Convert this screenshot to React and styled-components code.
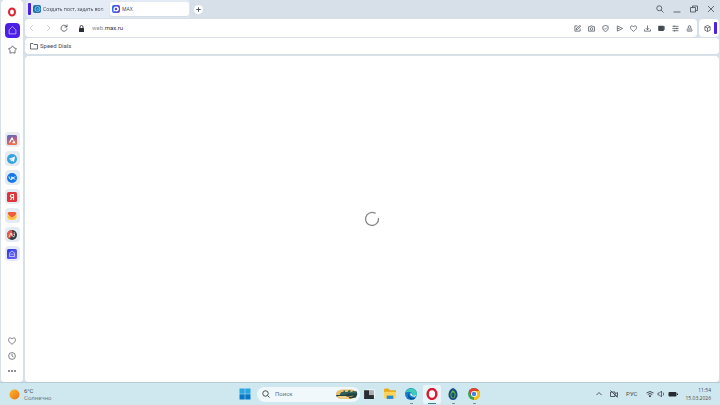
import styled, { createGlobalStyle, css } from 'styled-components';

const GlobalStyle = createGlobalStyle`
  * {
    box-sizing: border-box;
  }
  body {
    margin: 0;
    font-family: Roboto, 'Open Sans', sans-serif;
    font-size: 6px;
    line-height: 8px;
    color: #464d58;
    background: #d7e0e9;
  }
  button, input {
    font: inherit;
    color: inherit;
    border: none;
    padding: 0;
    background: none;
  }
  svg {
    display: block;
    flex: none;
  }
`;

const Screen = styled.div`
  height: 100vh;
  display: flex;
  flex-direction: column;
  overflow: hidden;
`;

const Browser = styled.div`
  flex: 1;
  min-height: 0;
  display: flex;
  gap: 2px;
  padding: 0 1px;
`;

const Sidebar = styled.aside`
  width: 22px;
  padding: 4px 0;
  display: flex;
  flex-direction: column;
  align-items: center;
  background: #fff;
  border-radius: 4px;
`;

const SideGroup = styled.nav`
  display: flex;
  flex-direction: column;
  gap: ${({ $gap }) => $gap}px;

  &:nth-child(2) {
    margin-top: 75px;
  }
  &:last-child {
    margin-top: auto;
  }
`;

const sideFills = {
  active: '#4c1fe8',
  tile: '#e5ebf2',
};

const SideButton = styled.button`
  width: 15px;
  height: 15px;
  display: grid;
  place-items: center;
  border-radius: 4px;
  background: ${({ $fill }) => sideFills[$fill] || 'none'};
  color: ${({ $fill }) => ($fill === 'active' ? '#d9d0ff' : '#5a5f67')};
`;

const Main = styled.div`
  flex: 1;
  min-width: 0;
  display: flex;
  flex-direction: column;
`;

const TitleBar = styled.header`
  height: 19px;
  padding: 0 0 1px 1px;
  display: flex;
  align-items: center;
`;

const TabIsland = styled.div`
  height: 18px;
  padding: 0 1px 0 2px;
  display: flex;
  align-items: center;
  background: #e5ecf6;
  border-radius: 4px;
`;

const Accent = styled.span`
  width: 3px;
  height: 12px;
  flex: none;
  border-radius: 1px;
  background: #4c1fe8;
`;

const Tab = styled.button`
  width: 79px;
  height: 14px;
  padding: 0 2px;
  display: flex;
  align-items: center;
  gap: 2px;
  font-family: 'Open Sans', sans-serif;
  font-size: 5px;
  text-align: left;
  white-space: nowrap;
  color: #38404c;
  border-radius: 3px;

  ${({ $active }) =>
    $active &&
    css`
      background: #fff;
      box-shadow: 0 1px 2px #a9b5c466;
    `}
`;

const TabTitle = styled.span`
  flex: 1;
  mask-image: linear-gradient(90deg, #000 85%, #0004);
`;

const NewTab = styled.button`
  width: 9px;
  height: 9px;
  margin-left: 4px;
  display: grid;
  place-items: center;
  background: #fff;
  border-radius: 50%;
`;

const WindowControls = styled.div`
  margin-left: auto;
  padding-right: 3px;
  display: flex;
  gap: 7px;
`;

const IconButton = styled.button`
  width: 10px;
  height: 12px;
  display: grid;
  place-items: center;
  color: ${({ $muted }) => ($muted ? '#c5c9ce' : '#444a52')};
`;

const ToolbarRow = styled.div`
  height: 18px;
  margin-bottom: 1px;
  display: flex;
  gap: 2px;
`;

const Toolbar = styled.div`
  flex: 1;
  min-width: 0;
  padding: 0 3px 0 2px;
  display: flex;
  align-items: center;
  background: #fff;
  border-radius: 4px;
`;

const NavButtons = styled.div`
  display: flex;
  gap: 6px;
`;

const Address = styled.button`
  flex: 1;
  padding: 0 9px;
  display: flex;
  align-items: center;
  gap: 7px;
  text-align: left;
  color: #8b9097;

  b {
    font-weight: 400;
    color: #30343a;
  }
`;

const Actions = styled.div`
  display: flex;
  gap: 4px;
`;

const SidePanel = styled.div`
  width: 20px;
  padding: 0 2px 0 3px;
  display: flex;
  align-items: center;
  justify-content: space-between;
  background: #fff;
  border-radius: 4px;
`;

const Bookmarks = styled.nav`
  height: 16px;
  margin-bottom: 2px;
  padding: 0 5px;
  display: flex;
  align-items: center;
  background: #fff;
  border-radius: 4px;
`;

const Bookmark = styled.button`
  display: flex;
  align-items: center;
  gap: 2px;
`;

const Page = styled.main`
  flex: 1;
  display: grid;
  place-items: center;
  background: #fff;
  border-radius: 4px;
`;

const Taskbar = styled.footer`
  height: 23px;
  padding: 0 9px;
  display: grid;
  grid-template-columns: 1fr auto 1fr;
  align-items: center;
  background: #cfe8ef;
  border-top: 1px solid #bacdd6;
`;

const Weather = styled.button`
  justify-self: start;
  display: flex;
  align-items: center;
  gap: 4px;
  text-align: left;
  line-height: 7px;

  small {
    display: block;
    font-size: 6px;
    color: #6f8088;
  }
`;

const TaskCenter = styled.div`
  padding-left: 2px;
  display: flex;
  align-items: center;
`;

const StartButton = styled.button`
  margin-right: 6px;
`;

const SearchBox = styled.label`
  width: 103px;
  height: 15px;
  padding: 0 2px 0 5px;
  display: flex;
  align-items: center;
  gap: 5px;
  background: #f0f8fb;
  border-radius: 8px;

  input {
    flex: 1;
    min-width: 0;
    outline: none;
  }
  input::placeholder {
    color: #66727a;
    opacity: 1;
  }
`;

const TaskApps = styled.nav`
  display: flex;
  gap: 3px;
`;

const TaskApp = styled.button`
  width: 18px;
  height: 19px;
  padding-top: 3px;
  display: flex;
  flex-direction: column;
  align-items: center;
  justify-content: space-between;
  border-radius: 2px;
  background: ${({ $active }) => ($active ? '#e9f5f9' : 'none')};

  &::after {
    content: '';
    width: ${({ $active }) => ($active ? 8 : 3)}px;
    height: 1px;
    background: ${({ $active, $running }) => {
      if ($active) return '#31849a';
      return $running ? '#78939d' : 'transparent';
    }};
  }
`;

const Tray = styled.div`
  justify-self: end;
  display: flex;
  align-items: center;
`;

const TrayButton = styled.button`
  height: 12px;
  margin-right: 8px;
  display: flex;
  align-items: center;
  gap: 3px;
`;

const Clock = styled.time`
  font-family: 'Open Sans', sans-serif;
  font-size: 5px;
  text-align: right;
  line-height: 8px;
`;

function Line({ size = 8, width = 1.6, children }) {
  return (
    <svg
      width={size}
      height={size}
      viewBox="0 0 16 16"
      fill="none"
      stroke="currentColor"
      strokeWidth={width}
      strokeLinejoin="round"
      aria-hidden="true"
    >
      {children}
    </svg>
  );
}

function Art({ width = 10, height = 10, children }) {
  return (
    <svg width={width} height={height} viewBox={`0 0 ${width * 2} ${height * 2}`} aria-hidden="true">
      {children}
    </svg>
  );
}

const heart = <path d="M8 14.500C3 11 1 8.500 1 5.500 1 1 6.500.8 8 4.200 9.500.8 15 1 15 5.500c0 3-2 5.500-7 9z" />;

const pinned = [
  {
    name: 'Aria',
    art: (
      <>
        <defs>
          <linearGradient id="aria" x2="0.3" y2="1">
            <stop stopColor="#5867bd" />
            <stop offset="0.5" stopColor="#a1628d" />
            <stop offset="1" stopColor="#ef7048" />
          </linearGradient>
        </defs>
        <rect width="20" height="20" rx="3" fill="url(#aria)" />
        <path d="M5 15 10 6l2 4M11 15h4l-2-4" fill="none" stroke="#fff" strokeWidth="2.5" />
      </>
    ),
  },
  {
    name: 'Telegram',
    art: (
      <>
        <circle cx="10" cy="10" r="10" fill="#34a4dc" />
        <path d="m3 10 13-5-2 11-4-3-2 2-1-4z" fill="#fff" />
        <path d="m7 11 6-4-4 5" fill="#a5cfe5" />
      </>
    ),
  },
  {
    name: 'VK',
    art: (
      <>
        <circle cx="10" cy="10" r="10" fill="#1478e8" />
        <path d="M4 7c.5 4 2 6 5.500 6V7M16 7c-1 2-3 3-6 3 3 0 5 1 6 3" fill="none" stroke="#fff" strokeWidth="2" />
      </>
    ),
  },
  {
    name: 'Яндекс',
    art: (
      <>
        <rect width="20" height="20" rx="3" fill="#df3539" />
        <path d="M13 16V5H10c-4 0-4 6 0 6h3M10 11l-3 5" fill="none" stroke="#fff" strokeWidth="2.2" />
      </>
    ),
  },
  {
    name: 'Почта',
    art: (
      <>
        <path d="M1 7h18v7q0 4-5 4H6q-5 0-5-4z" fill="#ffd56b" />
        <path d="m1 8 9 6 9-6v4q-4 5-9 5t-9-5z" fill="#ffb944" />
        <path d="M1 5q0-3 4-3h10q4 0 4 3-2 4-9 8Q3 9 1 5z" fill="#ef5b38" />
      </>
    ),
  },
  {
    name: 'Афиша',
    art: (
      <>
        <circle cx="10" cy="10" r="10" fill="#383b42" />
        <path d="M10 0a10 10 0 0 0-6 18l8-8z" fill="#e35e4d" />
        <path d="m4 14 4-8 3 7M13 6h3M13 9h3M12 14l4-3" fill="none" stroke="#eee" strokeWidth="1.8" />
      </>
    ),
  },
  {
    name: 'Дом',
    art: (
      <>
        <defs>
          <linearGradient id="home-tile" x2="1" y2="1">
            <stop stopColor="#2837e6" />
            <stop offset="1" stopColor="#7764ef" />
          </linearGradient>
        </defs>
        <rect width="20" height="20" rx="3" fill="url(#home-tile)" />
        <path d="m4 9 6-5 6 5M5 9v6h10V9M8 9v3M12 9v3" fill="none" stroke="#dce0ff" strokeWidth="1.5" />
      </>
    ),
  },
];

const sideTools = [
  { name: 'Избранное', icon: heart },
  {
    name: 'История',
    icon: (
      <>
        <circle cx="8" cy="8" r="6.8" />
        <path d="M8 4v4l3 2" />
      </>
    ),
  },
  {
    name: 'Ещё',
    icon: (
      <g fill="currentColor" stroke="none">
        <circle cx="2" cy="8" r="1.8" />
        <circle cx="8" cy="8" r="1.8" />
        <circle cx="14" cy="8" r="1.8" />
      </g>
    ),
  },
];

const windowButtons = [
  {
    name: 'Поиск вкладок',
    icon: (
      <>
        <circle cx="6.5" cy="6.5" r="5" />
        <path d="m10 10 5 5" />
      </>
    ),
  },
  { name: 'Свернуть', icon: <path d="M1 14h14" /> },
  { name: 'Восстановить', icon: <path d="M1 5h10v9H1zM5 5V2h10v9h-4" /> },
  { name: 'Закрыть', icon: <path d="m2 2 12 12M14 2 2 14" /> },
];

const actions = [
  { name: 'Изменить', icon: <path d="M8 2H2v12h12V8M5 11l1-4 8-6 1 2-7 7z" /> },
  {
    name: 'Снимок',
    icon: (
      <>
        <path d="M1 4h4l1-2h4l1 2h4v10H1z" />
        <circle cx="8" cy="9" r="3" />
      </>
    ),
  },
  { name: 'Защита', icon: <path d="m8 1 6 2v6q-1 4-6 6-5-2-6-6V3zM5 8l2 2 4-4" /> },
  { name: 'Отправить', icon: <path d="m3 2 12 6-12 6V2zM3 8h5" /> },
  { name: 'В избранное', icon: heart },
  { name: 'Загрузки', icon: <path d="M8 1v10M4 7l4 4 4-4M1 10v4h14v-4" /> },
  {
    name: 'Кошелёк',
    icon: (
      <>
        <path d="M2 3h10v9H2z" fill="currentColor" strokeWidth="3" />
        <path d="M15 3v8" />
      </>
    ),
  },
  { name: 'Настройка', icon: <path d="M1 3h14M1 8h14M1 13h14M5 1v4M11 6v4M6 11v4" /> },
  {
    name: 'Профиль',
    icon: (
      <>
        <circle cx="8" cy="4.5" r="3" />
        <path d="M5 7c-3 2-3 7-2 7h10c1 0 1-5-2-7M5 11h6" />
      </>
    ),
  },
];

const apps = [
  {
    name: 'Представление задач',
    art: (
      <>
        <path d="M6 2h16v16H6z" fill="#eef3f4" />
        <path d="M2 4h9v9h9v7H2z" fill="#282c31" />
        <path d="M11 4h9v9h-9z" fill="#a7adb1" />
      </>
    ),
  },
  {
    name: 'Проводник',
    art: (
      <>
        <path d="M0 3q0-2 2-2h6l3 3h11v6H0z" fill="#e8a91d" />
        <path d="M0 7h22v12H0z" fill="#ffd45a" />
        <path d="M5 14h12v6H5z" fill="#2788cc" />
      </>
    ),
  },
  {
    name: 'Edge',
    running: true,
    art: (
      <>
        <circle cx="11" cy="11" r="11" fill="#147dcc" />
        <path d="M1 8C4-3 22-1 22 11c0 5-8 6-9 2 2-5-5-8-12-5z" fill="#42cbb6" />
        <path d="M9 8c-5 6 1 12 10 10l-3 3C6 23 2 14 9 8z" fill="#0d4f9c" />
        <path d="M10 9q-2 7 8 7l4-3q-8 3-9 0 1-3-3-4z" fill="#e8f5f9" />
      </>
    ),
  },
  {
    name: 'Opera',
    active: true,
    art: <ellipse cx="11" cy="11" rx="8" ry="9" fill="#fff" stroke="#d91a2e" strokeWidth="4.5" />,
  },
  {
    name: 'Защита',
    running: true,
    art: (
      <>
        <path d="M11 0c6 2 9 8 8 15-2 5-4 7-8 7s-6-2-8-7C2 8 5 2 11 0z" fill="#174d83" />
        <path d="M11 4c4 3 6 7 4 12-2 4-6 4-8 0-2-5 0-9 4-12z" fill="#69b944" />
        <ellipse cx="11" cy="13" rx="3" ry="5" fill="#155468" />
      </>
    ),
  },
  {
    name: 'Chrome',
    running: true,
    art: (
      <>
        <circle cx="11" cy="11" r="11" fill="#35a651" />
        <path d="M20.5 5.500A11 11 0 0 1 11 22l0-11V5.500z" fill="#fbc116" />
        <path d="M1.500 5.500A11 11 0 0 1 20.500 5.500H11L6 14z" fill="#e34133" />
        <circle cx="11" cy="11" r="5.5" fill="#fff" />
        <circle cx="11" cy="11" r="4" fill="#4080ed" />
      </>
    ),
  },
];

function BrowserSidebar() {
  return (
    <Sidebar>
      <SideGroup $gap={4}>
        <SideButton aria-label="Opera">
          <Art>
            <ellipse cx="10" cy="10" rx="6" ry="7" fill="none" stroke="#df2334" strokeWidth="4" />
          </Art>
        </SideButton>
        <SideButton $fill="active" aria-label="Рабочее пространство">
          <Line size={9} width={1.3}>
            <path d="M2 7 8 1l6 6v7H2z" />
          </Line>
        </SideButton>
        <SideButton aria-label="Закладки">
          <Line size={9} width={1.5}>
            <path d="M8 1.500 10.500 5l4.500 1.500-2.500 3.500v4.500L8 13.500l-4.500 1V10L1 6.500 5.500 5z" />
          </Line>
        </SideButton>
      </SideGroup>
      <SideGroup $gap={4}>
        {pinned.map(({ name, art }) => (
          <SideButton key={name} $fill="tile" aria-label={name}>
            <svg width="10" height="10" viewBox="0 0 20 20" aria-hidden="true">
              {art}
            </svg>
          </SideButton>
        ))}
      </SideGroup>
      <SideGroup $gap={0}>
        {sideTools.map(({ name, icon }) => (
          <SideButton key={name} aria-label={name}>
            <Line>{icon}</Line>
          </SideButton>
        ))}
      </SideGroup>
    </Sidebar>
  );
}

function Tabs() {
  return (
    <TitleBar>
      <TabIsland>
        <Accent />
        <Tab>
          <Art width={8} height={8}>
            <rect width="16" height="16" rx="4" fill="#1e6fae" />
            <circle cx="9" cy="8" r="5" fill="none" stroke="#a5d9f4" strokeWidth="1.5" />
            <path d="m6 9 5-4v6z" fill="#3fb1e8" />
          </Art>
          <TabTitle>Создать пост, задать воп</TabTitle>
        </Tab>
        <Tab $active>
          <Art width={8} height={8}>
            <defs>
              <linearGradient id="max" x2="1">
                <stop stopColor="#2b72ef" />
                <stop offset="1" stopColor="#7836cf" />
              </linearGradient>
            </defs>
            <rect width="16" height="16" rx="4" fill="url(#max)" />
            <path d="M8 3a5 5 0 1 1-2 9l-3 1V8a5 5 0 0 1 5-5z" fill="#fff" />
            <circle cx="8" cy="8" r="2.5" fill="#4b50dd" />
          </Art>
          <span>MAX</span>
        </Tab>
      </TabIsland>
      <NewTab aria-label="Новая вкладка">
        <Line size={5} width={3}>
          <path d="M8 1v14M1 8h14" />
        </Line>
      </NewTab>
      <WindowControls>
        {windowButtons.map(({ name, icon }) => (
          <IconButton key={name} aria-label={name}>
            <Line>{icon}</Line>
          </IconButton>
        ))}
      </WindowControls>
    </TitleBar>
  );
}

function AddressBar() {
  return (
    <ToolbarRow>
      <Toolbar>
        <NavButtons>
          <IconButton $muted aria-label="Назад">
            <Line>
              <path d="M10 2 4 8l6 6" />
            </Line>
          </IconButton>
          <IconButton $muted aria-label="Вперёд">
            <Line>
              <path d="m6 2 6 6-6 6" />
            </Line>
          </IconButton>
          <IconButton aria-label="Обновить">
            <Line>
              <path d="M14 9a6 6 0 1 1-2-5l2 2M14 1v5H9" />
            </Line>
          </IconButton>
        </NavButtons>
        <Address>
          <Art width={7} height={7}>
            <path d="M4 7V4q0-3 3-3t3 3v3" fill="none" stroke="#2b2f35" strokeWidth="1.8" />
            <rect x="2" y="6" width="10" height="8" rx="1" fill="#2b2f35" />
          </Art>
          <span>
            web.<b>max.ru</b>
          </span>
        </Address>
        <Actions>
          {actions.map(({ name, icon }) => (
            <IconButton key={name} aria-label={name}>
              <Line size={7}>{icon}</Line>
            </IconButton>
          ))}
        </Actions>
      </Toolbar>
      <SidePanel>
        <IconButton aria-label="Расширения">
          <Line size={7}>
            <path d="m8 1 6 3v8l-6 3-6-3V4zM2 4l6 3 6-3M8 7v8" />
          </Line>
        </IconButton>
        <Accent />
      </SidePanel>
    </ToolbarRow>
  );
}

function WindowsTaskbar() {
  return (
    <Taskbar>
      <Weather>
        <Art width={11} height={11}>
          <defs>
            <linearGradient id="sun" x2="1" y2="1">
              <stop stopColor="#fdb72f" />
              <stop offset="1" stopColor="#ea7111" />
            </linearGradient>
          </defs>
          <circle cx="11" cy="11" r="10" fill="url(#sun)" />
        </Art>
        <span>
          6°C
          <small>Солнечно</small>
        </span>
      </Weather>
      <TaskCenter>
        <StartButton aria-label="Пуск">
          <Art width={12} height={12}>
            <path d="M1 1h10.500v10.500H1zM12.500 1H23v10.500H12.500z" fill="#29a5e2" />
            <path d="M1 12.500h10.500V23H1zM12.500 12.500H23V23H12.500z" fill="#0878c9" />
          </Art>
        </StartButton>
        <SearchBox>
          <Line width={2}>
            <circle cx="7" cy="7" r="5.5" />
            <path d="m11 11 4 4" />
          </Line>
          <input type="text" placeholder="Поиск" aria-label="Поиск" />
          <Art width={23} height={12}>
            <path d="M2 10Q4 4 14 3h20q9 2 10 9-2 8-12 10H12Q2 21 2 10z" fill="#e6bd6b" />
            <path d="M10 12l3-4h4V5h3v3h5l3-4 3 1v4l6-3 7 1v7H10z" fill="#315f57" />
            <path d="M2 14h18l7-3h18l-3 8-12 2-9-4H3z" fill="#1d4142" />
            <path d="M4 16h17l8 3-4 2H12z" fill="#f1d28d" />
            <path d="m22 17 16-2-5 3z" fill="#c6904e" />
          </Art>
        </SearchBox>
        <TaskApps>
          {apps.map(({ name, art, active, running }) => (
            <TaskApp key={name} $active={active} $running={running} aria-label={name}>
              <svg width="12" height="12" viewBox="0 0 22 22" aria-hidden="true">
                {art}
              </svg>
            </TaskApp>
          ))}
        </TaskApps>
      </TaskCenter>
      <Tray>
        <TrayButton aria-label="Скрытые значки">
          <Line size={6} width={2.4}>
            <path d="m1 11 7-7 7 7" />
          </Line>
        </TrayButton>
        <TrayButton aria-label="Камера отключена">
          <Line width={1.8}>
            <path d="M1 4h9v9H1zM10 8l5-3v8l-5-3M1 1l14 14" />
          </Line>
        </TrayButton>
        <TrayButton>РУС</TrayButton>
        <TrayButton aria-label="Сеть, звук и батарея">
          <Line width={2}>
            <path d="M1 6q7-6 14 0M3.500 9q4.500-4 9 0M6 12q2-2 4 0l-2 2z" />
          </Line>
          <Line>
            <path d="M2 6h3l4-4v12l-4-4H2zM12 5q3 3 0 6" />
          </Line>
          <Art width={10} height={8}>
            <rect x="1" y="4" width="16" height="9" rx="2" fill="#252b30" />
            <path d="M18 7h2v3h-2z" fill="#252b30" />
          </Art>
        </TrayButton>
        <Clock dateTime="2026-03-15T11:54">
          11:54
          <br />
          15.03.2026
        </Clock>
      </Tray>
    </Taskbar>
  );
}

function App() {
  return (
    <>
      <GlobalStyle />
      <Screen>
        <Browser>
          <BrowserSidebar />
          <Main>
            <Tabs />
            <AddressBar />
            <Bookmarks>
              <Bookmark>
                <Line>
                  <path d="M1 3h5l2 2h7v9H1z" />
                </Line>
                Speed Dials
              </Bookmark>
            </Bookmarks>
            <Page aria-busy="true">
              <svg width="16" height="16" viewBox="0 0 16 16" role="img" aria-label="Загрузка">
                <path
                  d="M11 2.200A6.500 6.500 0 1 0 14.500 7.500"
                  fill="none"
                  stroke="#858585"
                  strokeWidth="1.3"
                  strokeLinecap="round"
                />
              </svg>
            </Page>
          </Main>
        </Browser>
        <WindowsTaskbar />
      </Screen>
    </>
  );
}

export default App;
